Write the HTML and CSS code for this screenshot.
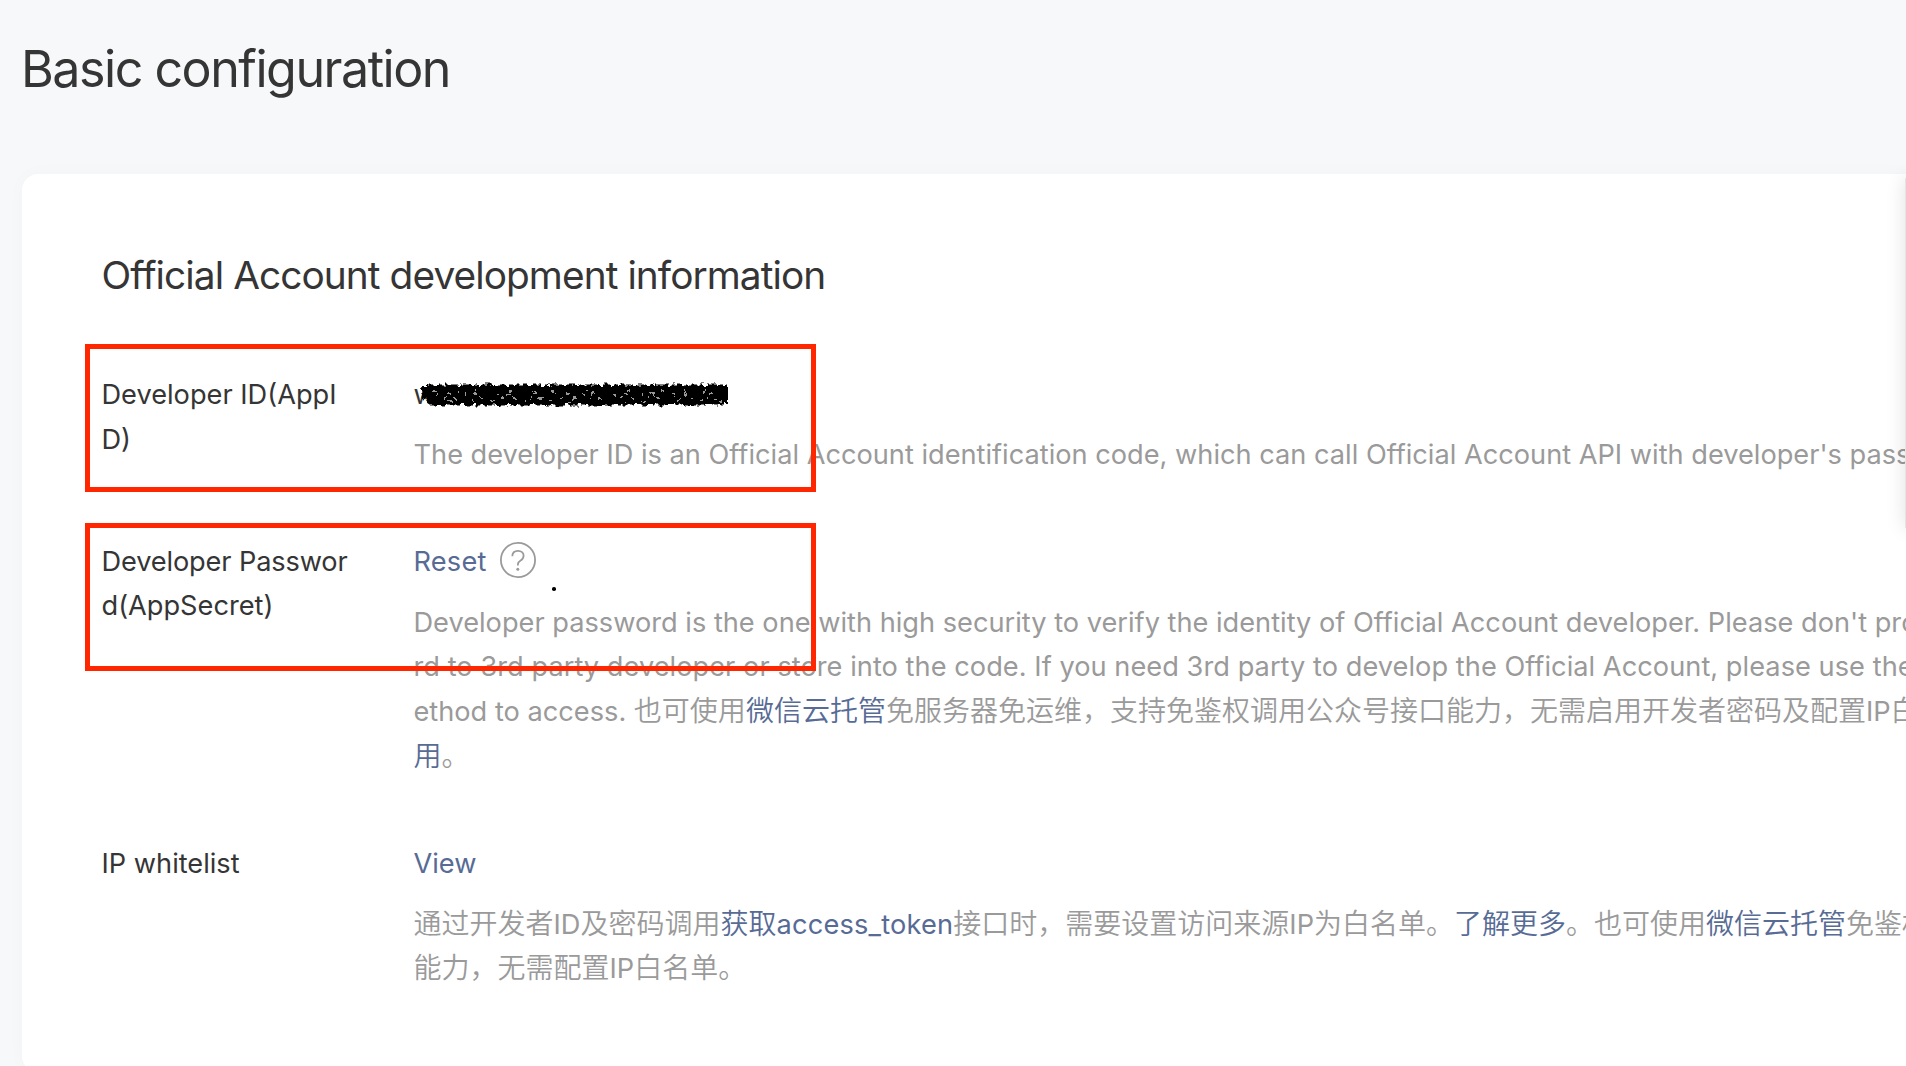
FILE: index.html
```
<!DOCTYPE html>
<html lang="zh-CN">
<head>
<meta charset="utf-8">
<title>Basic configuration</title>
<link rel="stylesheet" href="styles.css">
</head>
<body>
<header class="page-header"><h1 class="page-title">Basic configuration</h1></header>
<main class="card">
  <h2 class="section-title">Official Account development information</h2>
  <dl class="rows">
    <div class="row">
      <dt class="label">Developer ID(AppI<br>D)</dt>
      <dd class="value">
        <div class="field">w<svg class="redaction" width="316" height="30" viewBox="0 0 316 30">
          <defs><filter id="rough" x="-2%" y="-20%" width="104%" height="140%"><feTurbulence type="fractalNoise" baseFrequency="0.22" numOctaves="2" seed="4"/><feDisplacementMap in="SourceGraphic" scale="7" xChannelSelector="R" yChannelSelector="G"/></filter></defs>
          <g filter="url(#rough)">
            <path class="ink" d="M2 5H309V23H10L6 16L3 21Z"/>
            <path class="ink-edge" d="M8 5H308M10 23H306"/>
            <path class="gaps" d="M18 13H304M24 17H298"/>
            <path class="gaps gaps-sparse" d="M14 10H304M30 20H302"/>
          </g></svg></div>
        <p class="help">The developer ID is an Official Account identification code, which can call Official Account API with developer's password.</p>
      </dd>
    </div>
    <div class="row">
      <dt class="label"><span class="tight">Developer Passwor</span><br>d(AppSecret)</dt>
      <dd class="value">
        <div class="field"><a class="link loose">Reset</a><svg class="hint" width="36" height="36" viewBox="0 0 36 36"><circle cx="18" cy="18" r="17.1"/><path d="M12.300 14.200c.1-3.200 2.300-5.400 5.600-5.400 3.400 0 5.700 2 5.700 4.900 0 2.100-1 3.500-3 4.800-2 1.200-2.700 2.100-2.700 3.800v1.300"/><circle class="hint-dot" cx="17.800" cy="27.300" r="1.500"/></svg></div>
        <p class="help help-password">Developer password is the one with high security to verify the identity of Official Account developer. Please don't provide passwo<br><span class="wide">rd to 3rd party developer or store into the code. If you need 3rd party to develop the Official Account, please use the authorized m</span><br>ethod to access. <span class="cn">也可使用<a class="link">微信云托管</a>免服务器免运维，支持免鉴权调用公众号接口能力，无需启用开发者密码及配置</span>IP<span class="cn">白名单</span><br><span class="cn"><a class="link">用</a>。</span></p>
      </dd>
    </div>
    <div class="row">
      <dt class="label">IP whitelist</dt>
      <dd class="value">
        <div class="field"><a class="link">View</a></div>
        <p class="help help-whitelist"><span class="cn">通过开发者</span>ID<span class="cn">及密码调用<a class="link">获取</a></span><a class="link loose">access_token</a><span class="cn">接口时，需要设置访问来源</span>IP<span class="cn">为白名单。<a class="link">了解更多</a>。也可使用<a class="link">微信云托管</a>免鉴权调用</span><br><span class="cn">能力，无需配置</span>IP<span class="cn">白名单。</span></p>
      </dd>
    </div>
  </dl>
</main>
<div class="mark mark-id"></div>
<div class="mark mark-password"></div>
<div class="stray-dot"></div>
<div class="side-panel"></div>
</body>
</html>
```
FILE: styles.css
```
* { box-sizing: border-box; }
html { overflow: hidden; }
body {
  margin: 0;
  height: 1066px;
  overflow: hidden;
  position: relative;
  background: #f7f8fa;
  color: #353535;
  font: 27.2px/44.8px Inter, "Noto Sans CJK SC", sans-serif;
}
h1, h2, p, dl, dd { margin: 0; font-weight: 400; }
.page-header { height: 174px; padding: 36px 21px 0; }
.page-title { font-size: 50.2px; line-height: 66px; letter-spacing: -1.5px; white-space: nowrap; }
.card {
  margin-left: 22px;
  height: 898px;
  padding: 73px 0 0 79.5px;
  overflow: hidden;
  background: #fff;
  border-radius: 16px 0 0 16px;
  box-shadow: 0 0 20px rgba(0, 0, 0, 0.025);
}
.section-title { font-size: 38.8px; line-height: 56px; letter-spacing: -0.92px; }
.rows { display: grid; gap: 61.7px; padding-top: 70.4px; }
.row { display: grid; grid-template-columns: 312px 1fr; align-items: start; white-space: nowrap; }
.value { min-width: 0; }
.field { display: flex; align-items: center; height: 44.8px; }
.help { margin-top: 15px; color: #9a9a9a; }
.help-password { margin-top: 16.2px; }
.help-whitelist { margin-top: 16.2px; }
.link { color: #576b95; }
.tight { letter-spacing: -0.14px; }
.wide { letter-spacing: 0.04px; }
.loose { letter-spacing: 0.2px; }
.cn { font-size: 28px; line-height: 1; font-weight: 350; }
.hint { margin: -4px 0 0 13px; fill: none; stroke: #9a9a9a; stroke-width: 1.8; }
.hint-dot { fill: #9a9a9a; stroke: none; }
.redaction { margin-left: -17px; }
.ink { fill: #000; }
.ink-edge { fill: none; stroke: #000; stroke-width: 3; stroke-dasharray: 9 3 4 2 13 4; }
.gaps { fill: none; stroke: #ccc; stroke-width: 1.6; stroke-dasharray: 2 9 3 14 1 7 4 19; }
.gaps-sparse { stroke-dasharray: 2 22 1 17 3 31; }
.mark { position: absolute; left: 85px; width: 731px; height: 148px; border: 5px solid #ff2600; }
.mark-id { top: 344px; }
.mark-password { top: 523px; }
.stray-dot { position: absolute; left: 552px; top: 587px; width: 3.6px; height: 3.6px; border-radius: 50%; background: #000; }
.side-panel { position: absolute; left: 1905px; top: 178px; width: 40px; height: 350px; background: #e4e4e4; box-shadow: 0 0 20px rgba(0, 0, 0, 0.12); }
```
